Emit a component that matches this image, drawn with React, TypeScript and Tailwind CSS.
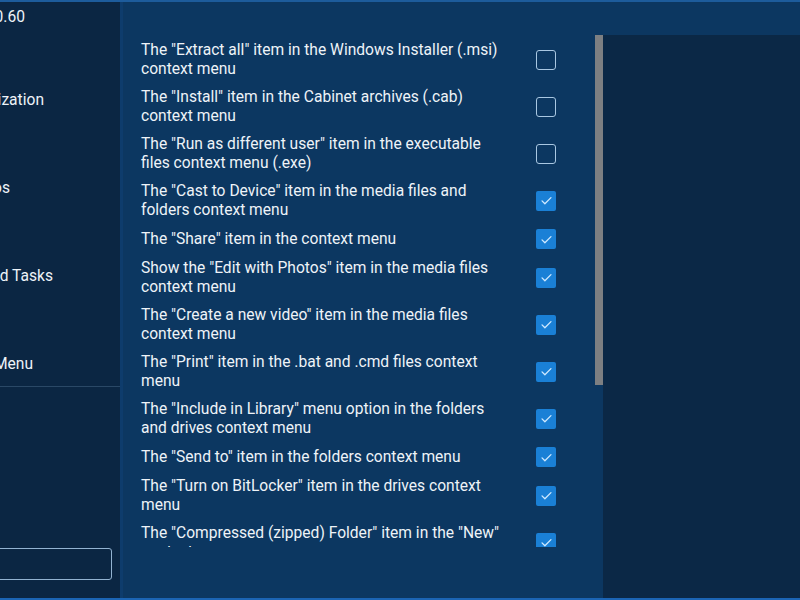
import React from "react";

const items: { label: string; checked: boolean }[] = [
  { label: 'The "Extract all" item in the Windows Installer (.msi) context menu', checked: false },
  { label: 'The "Install" item in the Cabinet archives (.cab) context menu', checked: false },
  { label: 'The "Run as different user" item in the executable files context menu (.exe)', checked: false },
  { label: 'The "Cast to Device" item in the media files and folders context menu', checked: true },
  { label: 'The "Share" item in the context menu', checked: true },
  { label: 'Show the "Edit with Photos" item in the media files context menu', checked: true },
  { label: 'The "Create a new video" item in the media files context menu', checked: true },
  { label: 'The "Print" item in the .bat and .cmd files context menu', checked: true },
  { label: 'The "Include in Library" menu option in the folders and drives context menu', checked: true },
  { label: 'The "Send to" item in the folders context menu', checked: true },
  { label: 'The "Turn on BitLocker" item in the drives context menu', checked: true },
  { label: 'The "Compressed (zipped) Folder" item in the "New" context menu', checked: true },
];

const navItems = [
  { label: "Optimization", end: "w-[44px]" },
  { label: "Videos", end: "w-[10px]" },
  { label: "Scheduled Tasks", end: "w-[53px]" },
  { label: "Context Menu", end: "w-[33px]" },
];

function CheckBox({ checked }: { checked: boolean }) {
  if (checked) {
    return (
      <div className="w-[20px] h-[20px] rounded-[2px] bg-[#1a80d6] flex items-center justify-center shrink-0">
        <svg className="w-[13px] h-[13px]" viewBox="0 0 16 16" fill="none" stroke="#cfe9ff" strokeWidth={1.6} strokeLinecap="round" strokeLinejoin="round">
          <path d="M2.5 8.5l3.5 3.5 7.5-7.5" />
        </svg>
      </div>
    );
  }
  return <div className="w-[20px] h-[20px] rounded-[3px] border-[1.5px] border-[#a9c7e2] shrink-0" />;
}

export default function App() {
  return (
    <div className="w-[800px] h-[600px] flex flex-col bg-[#0c3761] border-t-[2px] border-t-[#1d5c9c] border-b-[2px] border-b-[#1b64b4] overflow-hidden text-[#eef3f8] font-['Roboto',sans-serif]">
      <div className="flex flex-1 min-h-0">
        {/* Sidebar */}
        <div className="w-[123px] shrink-0 bg-[#0b2643] border-r-[3px] border-r-[#0e3c6c] flex flex-col overflow-hidden">
          <div className="h-[32px] flex items-center">
            <div className="w-[25px] flex justify-end whitespace-nowrap text-[15.6px]">v2.0.60</div>
          </div>
          {navItems.map((n) => (
            <div key={n.label} className="h-[88px] flex items-end pb-[12px] shrink-0">
              <div className={`${n.end} h-[20px] flex items-center justify-end whitespace-nowrap text-[15.6px] leading-[20px]`}>
                {n.label}
              </div>
            </div>
          ))}
          <div className="border-t border-[#2a4866]" />
          <div className="flex-1" />
          <div className="self-end w-[200px] h-[32px] mr-[8px] mb-[18px] rounded-[3px] border border-[#93b3d1] shrink-0" />
        </div>

        {/* Main list */}
        <div className="w-[480px] shrink-0 flex pt-[33px]">
          <div className="flex-1 h-[512px] overflow-hidden pl-[18px] pt-[1px]">
            {items.map((it) => (
              <div key={it.label} className="flex items-center py-[5px]">
                <div className="w-[364px] text-[15.6px] leading-[18.5px]">{it.label}</div>
                <div className="ml-[31px]">
                  <CheckBox checked={it.checked} />
                </div>
              </div>
            ))}
          </div>
          <div className="w-[8px] h-[350px] bg-[#7d7f82]" />
        </div>

        {/* Right panel */}
        <div className="flex-1 mt-[33px] bg-[#0b2846]" />
      </div>
    </div>
  );
}
